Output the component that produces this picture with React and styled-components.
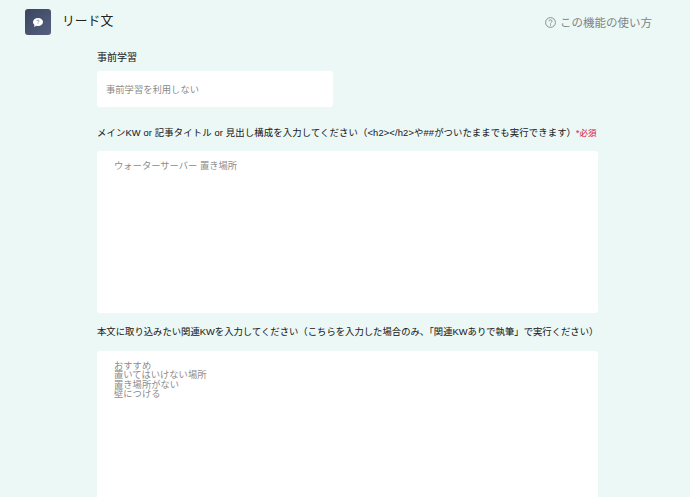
import React from "react";
import styled, { createGlobalStyle } from "styled-components";

const fontStack = `"Liberation Sans", "Noto Sans CJK JP", sans-serif`;

const GlobalStyle = createGlobalStyle`
  html, body {
    margin: 0;
    height: 100%;
    overflow: hidden;
    background: #ecf8f6;
  }
`;

const Page = styled.div`
  height: 497px;
  overflow: hidden;
  background: #ecf8f6;
  font-family: ${fontStack};
`;

const Header = styled.header`
  display: flex;
  align-items: center;
  justify-content: space-between;
  padding: 9px 38px 0 25px;
  height: 26px;
`;

const TitleGroup = styled.div`
  display: flex;
  align-items: center;
  gap: 11px;
`;

const IconBadge = styled.div`
  width: 26px;
  height: 26px;
  border-radius: 3px;
  background: linear-gradient(135deg, #3a4560, #556080);
  display: flex;
  align-items: center;
  justify-content: center;
`;

const Title = styled.h1`
  margin: 0 0 5px;
  font-size: 12.8px;
  font-weight: 400;
  color: #222;
`;

const HelpLink = styled.a`
  display: flex;
  align-items: center;
  gap: 4px;
  font-size: 11.5px;
  color: #808585;
`;

const Form = styled.main`
  width: 501px;
  margin: 15px 0 0 97px;
`;

const Label = styled.label`
  display: block;
  font-size: ${(p) => p.$size || 9.35}px;
  line-height: ${(p) => (p.$size ? 16 : 14)}px;
  letter-spacing: ${(p) => p.$spacing || 0}px;
  color: #222;
  white-space: nowrap;
  -webkit-text-stroke: 0.06px #222;
`;

const Required = styled.span`
  color: #e0204a;
  -webkit-text-stroke: 0.06px #e0204a;
  font-size: 8.5px;
  letter-spacing: 0;
`;

const Select = styled.div`
  width: 236px;
  height: 36px;
  margin: 5px 0 19px;
  padding-left: 9px;
  box-sizing: border-box;
  display: flex;
  align-items: center;
  background: #fff;
  border-radius: 3px;
  font-size: 9.3px;
  color: #8c8c8c;
`;

const TextArea = styled.textarea`
  display: block;
  width: 100%;
  height: ${(p) => p.$height}px;
  margin: ${(p) => p.$margin};
  padding: 11px 17px;
  box-sizing: border-box;
  border: none;
  border-radius: 3px;
  outline: none;
  resize: none;
  background: #fff;
  font-family: ${fontStack};
  font-size: 9.3px;
  line-height: 9.4px;
  &::placeholder {
    color: #8c8c8c;
    opacity: 1;
  }
`;

function ChatIcon() {
  return (
    <svg width="12" height="11" viewBox="0 0 12 11">
      <path d="M6 1C3 1 1 2.700 1 5c0 1.200.6 2.200 1.500 3L2 10l2.400-1.200c.5.100 1 .2 1.600.2 3 0 5-1.700 5-4S9 1 6 1z" fill="#fff" />
      <path d="M5 4c0-.6.4-1 1-1s1 .4 1 1c0 .8-1 .8-1 1.600M6 6.300v.6" fill="none" stroke="#6f7890" strokeWidth="0.7" />
    </svg>
  );
}

function HelpIcon() {
  return (
    <svg width="11" height="11" viewBox="0 0 11 11" fill="none" stroke="#808585" strokeWidth="0.9">
      <circle cx="5.500" cy="5.500" r="4.900" />
      <path d="M4 4.300c0-.9.7-1.500 1.500-1.500S7 3.400 7 4.200c0 1.100-1.500 1.200-1.500 2.400" />
      <circle cx="5.500" cy="8" r="0.300" />
    </svg>
  );
}

export default function App() {
  return (
    <Page>
      <GlobalStyle />
      <Header>
        <TitleGroup>
          <IconBadge>
            <ChatIcon />
          </IconBadge>
          <Title>リード文</Title>
        </TitleGroup>
        <HelpLink>
          <HelpIcon />
          この機能の使い方
        </HelpLink>
      </Header>
      <Form>
        <Label $size={10}>事前学習</Label>
        <Select>事前学習を利用しない</Select>
        <Label $spacing={0.14}>
          メインKW or 記事タイトル or 見出し構成を入力してください（&lt;h2&gt;&lt;/h2&gt;や##がついたままでも実行できます）
          <Required>*必須</Required>
        </Label>
        <TextArea $height={162} $margin="11px 0 12px" placeholder="ウォーターサーバー 置き場所" />
        <Label>本文に取り込みたい関連KWを入力してください（こちらを入力した場合のみ、「関連KWありで執筆」で実行ください）</Label>
        <TextArea
          $height={200}
          $margin="12px 0 0"
          placeholder={"おすすめ\n置いてはいけない場所\n置き場所がない\n壁につける"}
        />
      </Form>
    </Page>
  );
}
